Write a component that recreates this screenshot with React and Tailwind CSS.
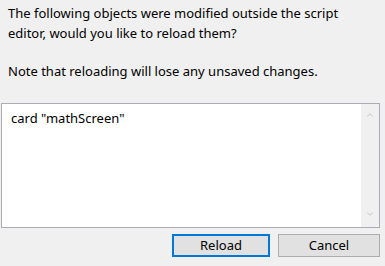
import { ChevronUp, ChevronDown } from 'lucide-react';

const App = () => {
  return (
    <div className="w-[385px] h-[266px] bg-[#f0f0f0] overflow-hidden text-[13px] leading-[20px] text-black" style={{ fontFamily: '"Noto Sans", "Open Sans", sans-serif' }}>
      {/* Message */}
      <div className="pl-[8px] pr-[6px] pt-[3px] h-[100px]">
        <p>The following objects were modified outside the script editor, would you like to reload them?</p>
        <p className="mt-[18px]">Note that reloading will lose any unsaved changes.</p>
      </div>

      {/* List box */}
      <div className="ml-[1px] mt-[3px] w-[379px] h-[125px] border border-[#abadb3] bg-white flex">
        <div className="flex-1 pl-[9px] pt-[4px]">card "mathScreen"</div>
        <div className="w-[18px] bg-[#f0f0f0] flex flex-col justify-between items-center pt-[6px] pb-[8px] text-[#bcbcbc]">
          <ChevronUp className="h-[10px] w-[10px]" strokeWidth={2} />
          <ChevronDown className="h-[10px] w-[10px]" strokeWidth={2} />
        </div>
      </div>

      {/* Buttons */}
      <div className="flex justify-end gap-[8px] pr-[5px] mt-[6px]">
        <button className="w-[98px] h-[23px] bg-[#e1e1e1] border-2 border-[#0078d7] text-[13px] leading-none">
          Reload
        </button>
        <button className="w-[102px] h-[23px] bg-[#e1e1e1] border border-[#adadad] text-[13px] leading-none">
          Cancel
        </button>
      </div>
    </div>
  );
};

export default App;
